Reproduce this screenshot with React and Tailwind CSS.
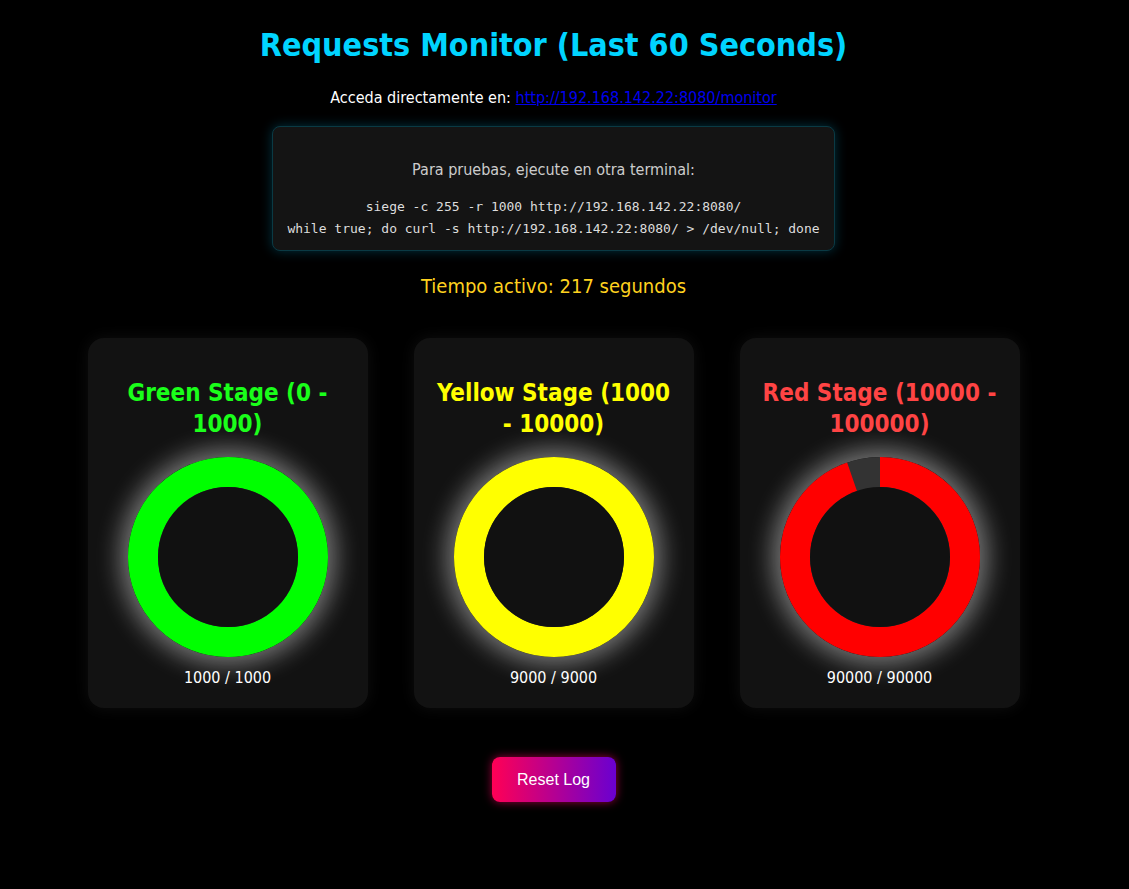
import React from 'react';

const stages = [
  { name: 'Green Stage (0 - 1000)', color: '#00ff00', titleClass: 'text-[#1aff1a]', frac: 1, label: '1000 / 1000' },
  { name: 'Yellow Stage (1000 - 10000)', color: '#ffff00', titleClass: 'text-[#ffff00]', frac: 1, label: '9000 / 9000' },
  { name: 'Red Stage (10000 - 100000)', color: '#ff0000', titleClass: 'text-[#ff4444]', frac: 0.945, label: '90000 / 90000' },
];

const Donut = ({ frac, color }) => {
  const r = 85;
  const c = 2 * Math.PI * r;
  return (
    <div className="w-[200px] h-[200px] rounded-full shadow-[0_0_24px_8px_rgba(255,255,255,0.42)]">
      <svg width="200" height="200" viewBox="0 0 200 200">
        <circle cx="100" cy="100" r="100" fill="#333333" />
        <circle
          cx="100"
          cy="100"
          r={r}
          fill="none"
          stroke={color}
          strokeWidth="30"
          strokeDasharray={`${c * frac} ${c}`}
          transform="rotate(-90 100 100)"
        />
        <circle cx="100" cy="100" r="70" fill="#111111" />
      </svg>
    </div>
  );
};

const StageCard = ({ stage }) => (
  <div className="w-[280px] h-[370px] bg-[#121212] rounded-[16px] shadow-[0_0_16px_rgba(255,255,255,0.06)] px-5 pt-10 flex flex-col items-center">
    <h2 className={`text-[24px] leading-[31px] font-bold text-center ${stage.titleClass}`}>{stage.name}</h2>
    <div className="mt-[17px]">
      <Donut frac={stage.frac} color={stage.color} />
    </div>
    <p className="mt-[11px] text-[16px] leading-[20px] text-white">{stage.label}</p>
  </div>
);

export default function App() {
  return (
    <div
      className="min-h-[889px] bg-black text-white flex flex-col items-center pr-[22px]"
      style={{ fontFamily: '"DejaVu Sans Condensed", "DejaVu Sans", sans-serif' }}
    >
      <h1 className="mt-[26px] text-[32px] leading-[38px] font-bold text-[#00d4ff]">
        Requests Monitor (Last 60 Seconds)
      </h1>
      <p className="mt-[24px] text-[16px] leading-[20px]">
        Acceda directamente en:{' '}
        <a href="#" className="text-[#0000ee] underline">http://192.168.142.22:8080/monitor</a>
      </p>
      <div className="mt-[18px] w-[563px] bg-[#141414] rounded-[8px] border border-[#0a3a44] shadow-[0_0_12px_rgba(0,200,255,0.25)] pt-[32px] pb-[10px] text-center">
        <p className="text-[16px] leading-[22px] text-[#cccccc]">Para pruebas, ejecute en otra terminal:</p>
        <div className="mt-[15px] text-[13px] leading-[22px] text-[#dddddd]" style={{ fontFamily: '"DejaVu Sans Mono", monospace' }}>
          <div>siege -c 255 -r 1000 http://192.168.142.22:8080/</div>
          <div>while true; do curl -s http://192.168.142.22:8080/ &gt; /dev/null; done</div>
        </div>
      </div>
      <p className="mt-[23px] text-[20px] leading-[24px] text-[#ffd21f]">Tiempo activo: 217 segundos</p>
      <div className="mt-[40px] flex gap-[46px]">
        {stages.map((s) => (
          <StageCard key={s.name} stage={s} />
        ))}
      </div>
      <button
        className="mt-[49px] w-[124px] h-[45px] rounded-[8px] text-white text-[16px] bg-[linear-gradient(to_right,#ff0055,#6a00d0)] shadow-[0_0_10px_rgba(255,0,100,0.6)]"
        style={{ fontFamily: '"Liberation Sans", Arial, sans-serif' }}
      >
        Reset Log
      </button>
    </div>
  );
}
